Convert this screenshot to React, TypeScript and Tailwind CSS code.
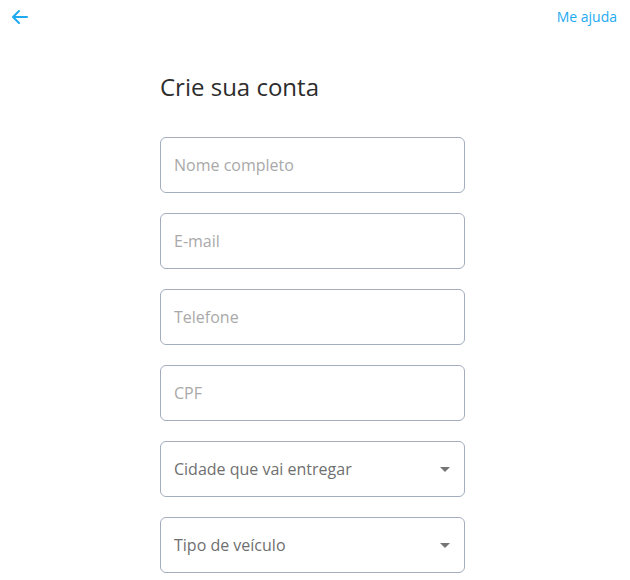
import { useState } from "react";

const font = { fontFamily: '"Open Sans", "Noto Sans", sans-serif' };

function TextField({ placeholder }: { placeholder: string }) {
  const [value, setValue] = useState("");
  return (
    <input
      value={value}
      onChange={(e) => setValue(e.target.value)}
      placeholder={placeholder}
      className="h-14 w-full rounded-md border border-[#a3adbd] bg-white px-[13px] text-base text-[#333] outline-none placeholder:text-[#a9a9a9]"
    />
  );
}

function SelectField({ label }: { label: string }) {
  return (
    <button
      type="button"
      className="flex h-14 w-full items-center justify-between rounded-md border border-[#a3adbd] bg-white pl-[13px] pr-[13px] text-left text-base text-[#6f6f6f]"
    >
      <span>{label}</span>
      <svg width="10" height="5" viewBox="0 0 10 5" className="mr-[1px]">
        <path d="M0 0h10L5 5z" fill="#757575" />
      </svg>
    </button>
  );
}

export default function App() {
  return (
    <main className="min-h-screen bg-white" style={font}>
      <header className="flex items-start justify-between px-[11px] pt-[9px]">
        <button type="button" className="text-[#1eaaf1]">
          <svg width="17" height="16" viewBox="0 0 17 16" fill="none">
            <path
              d="M16 8H2M8 2L2 8l6 6"
              stroke="currentColor"
              strokeWidth="2"
              strokeLinecap="round"
              strokeLinejoin="round"
            />
          </svg>
        </button>
        <a href="#" className="mr-[2px] mt-[-2px] text-sm text-[#1eaaf1]">
          Me ajuda
        </a>
      </header>

      <div className="ml-[160px] mt-[44px] w-[305px]">
        <h1 className="text-2xl text-[#2d2d2d]">Crie sua conta</h1>

        <div className="mt-[34px] flex flex-col gap-5">
          <TextField placeholder="Nome completo" />
          <TextField placeholder="E-mail" />
          <TextField placeholder="Telefone" />
          <TextField placeholder="CPF" />
          <SelectField label="Cidade que vai entregar" />
          <SelectField label="Tipo de veículo" />
        </div>
      </div>
    </main>
  );
}
